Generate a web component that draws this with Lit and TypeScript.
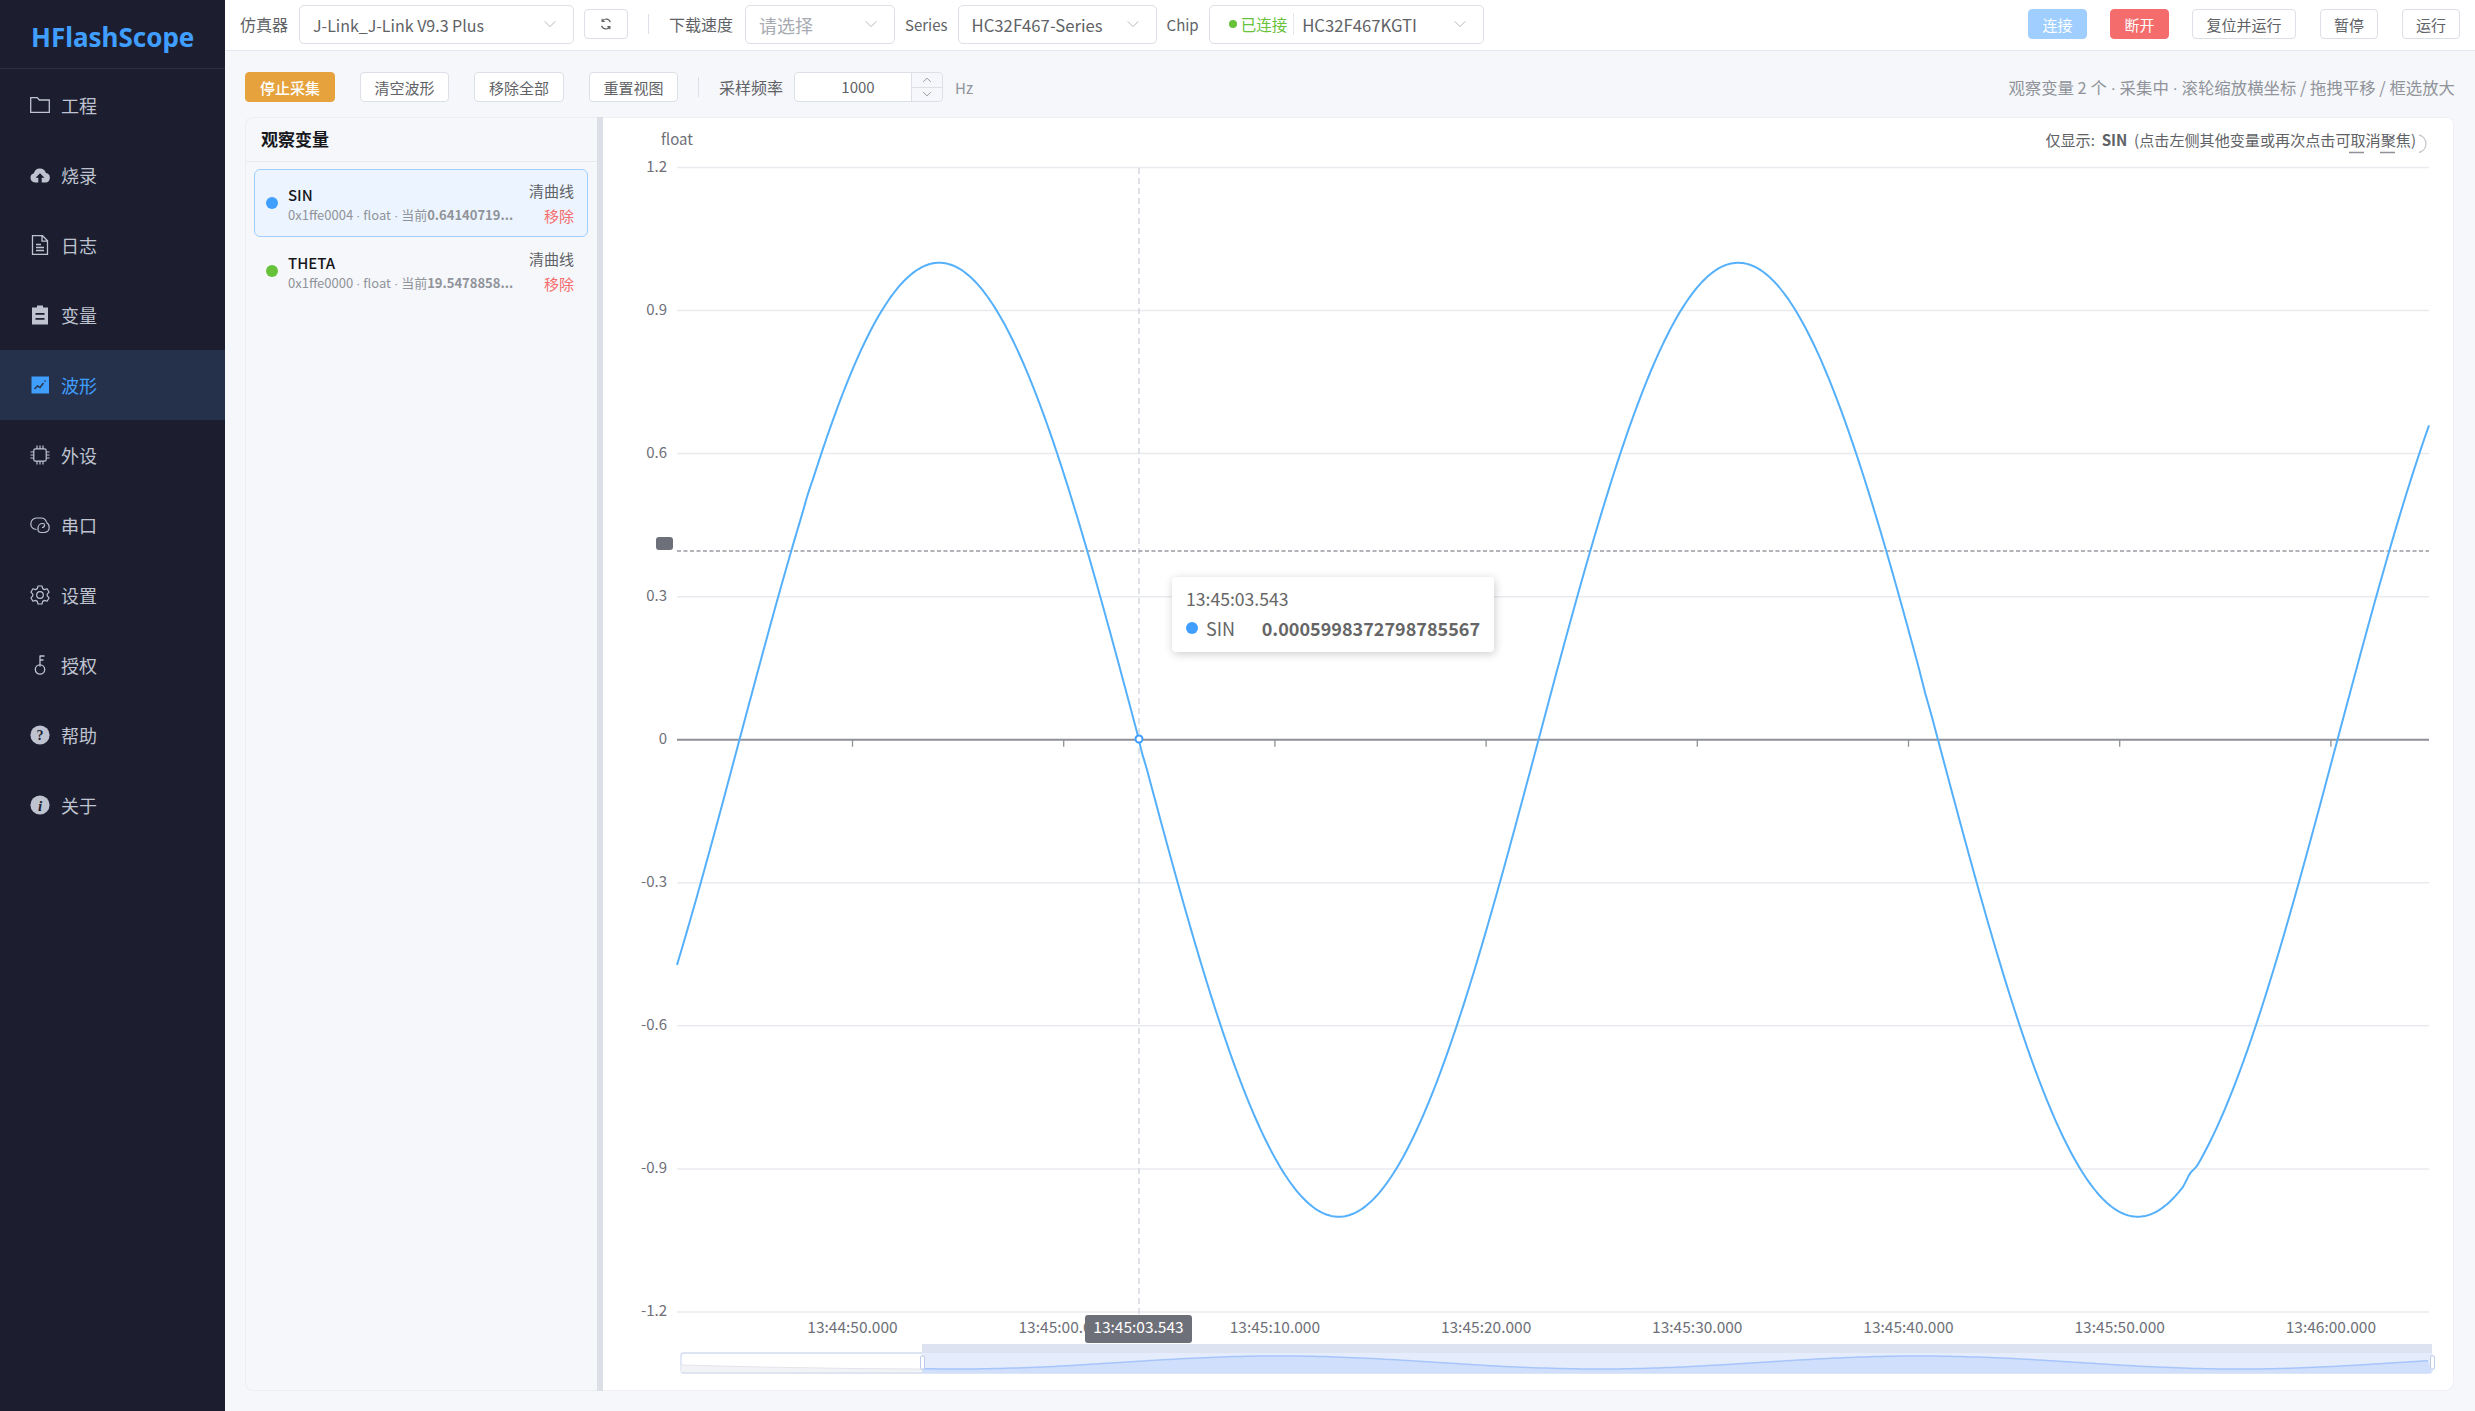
import { LitElement, html, css, svg } from "lit";
import { customElement } from "lit/decorators.js";

const icons: Record<string, unknown> = {
  folder: svg`<path d="M.7 2.600h6.600l2 2.400h10v12.400H.7z" fill="none" stroke="currentColor" stroke-width="1.300"/>`,
  cloud: svg`<path d="M5 17.500A4.700 4.700 0 0 1 3.900 8.300 6.200 6.200 0 0 1 15.900 8 4.800 4.800 0 0 1 15.500 17.500H11.700V12.800H14.500L10 8.200 5.500 12.800H8.300V17.500Z" fill="currentColor"/>`,
  doc: svg`<path d="M2.500.7h10l5 5v13.600h-15zM12 .7v5.500h5.500M6 9.500h5M6 12.500h8M6 15.500h8" fill="none" stroke="currentColor" stroke-width="1.300"/>`,
  clip: svg`<path fill-rule="evenodd" d="M7 .5h6v2h5v17H2v-17h5zM5.500 8v1.800h9V8zM5.500 13v1.800h9V13z" fill="currentColor"/>`,
  chart: svg`<rect x="1.500" y="1.500" width="17.500" height="17" fill="currentColor"/><path d="M4.500 14l3-3 2.500 1.500 3.500-4.500M14.500 6.500l1-1" fill="none" stroke="#25314a" stroke-width="1.400"/>`,
  cpu: svg`<path d="M5.500 3.800h9a1.700 1.700 0 0 1 1.700 1.700v9a1.700 1.700 0 0 1-1.700 1.700h-9a1.700 1.700 0 0 1-1.700-1.700v-9a1.700 1.700 0 0 1 1.700-1.700zM7 .5v3.300M10 .5v3.300M13 .5v3.300M7 16.200v3.300M10 16.200v3.300M13 16.200v3.300M.5 7h3.300M.5 10h3.300M.5 13h3.300M16.200 7h3.300M16.200 10h3.300M16.200 13h3.300" fill="none" stroke="currentColor" stroke-width="1.200"/>`,
  link: svg`<path d="M6.500 14.500C3 14.500.8 12 .8 9 .8 5.500 3.500 3 6.500 3H11c3 0 5 2 5.500 4.500M8 15.500V13c0-2.500 2-4.500 4.500-4.500H13c.8 0 1.500.8 1.500 1.800 0 1.500-1 2.200-2.500 2.200M16.500 7.500c1.700 1 2.700 2.700 2.700 5 0 3-2.200 5-5.200 5h-3c-1.500 0-2.500-.7-3-2" fill="none" stroke="currentColor" stroke-width="1.200"/>`,
  gear: svg`<path d="M8 1h4l.7 2.600 1.900 1 2.500-.8 2 3.400-1.900 1.900v1.800l1.900 1.900-2 3.400-2.500-.8-1.900 1L12 19H8l-.7-2.600-1.900-1-2.500.8-2-3.400 1.900-1.900V9.100L.900 7.200l2-3.400 2.500.8 1.900-1z" fill="none" stroke="currentColor" stroke-width="1.200" stroke-linejoin="round"/><circle cx="10" cy="10" r="3.300" fill="none" stroke="currentColor" stroke-width="1.200"/>`,
  key: svg`<path d="M10 .5v11M10 1h4.500M10 5h3.500" fill="none" stroke="currentColor" stroke-width="1.300"/><circle cx="10" cy="14.500" r="4.700" fill="none" stroke="currentColor" stroke-width="1.300"/>`,
  help: svg`<circle cx="10" cy="10" r="9.600" fill="currentColor"/><text x="10" y="15" text-anchor="middle" font-size="14" font-weight="700" font-family="Liberation Serif, serif" fill="#1c1e2f">?</text>`,
  info: svg`<circle cx="10" cy="10" r="9.600" fill="currentColor"/><text x="10" y="15.500" text-anchor="middle" font-size="15" font-weight="700" font-style="italic" font-family="Liberation Serif, serif" fill="#1c1e2f">i</text>`,
};

const NAV = [
  { label: "工程", icon: "folder" },
  { label: "烧录", icon: "cloud" },
  { label: "日志", icon: "doc" },
  { label: "变量", icon: "clip" },
  { label: "波形", icon: "chart", active: true },
  { label: "外设", icon: "cpu" },
  { label: "串口", icon: "link" },
  { label: "设置", icon: "gear" },
  { label: "授权", icon: "key" },
  { label: "帮助", icon: "help" },
  { label: "关于", icon: "info" },
];

const VARS = [
  { name: "SIN", addr: "0x1ffe0004", value: "0.64140719...", color: "#409eff", active: true },
  { name: "THETA", addr: "0x1ffe0000", value: "19.5478858...", color: "#67c23a", active: false },
];

const chevron = html`<svg class="chev" viewBox="0 0 16 16"><path d="M2 5l6 6 6-6" fill="none" stroke="currentColor" stroke-width="1"/></svg>`;
const dot = html`<span class="mid">·</span>`;

// chart geometry, in page pixels (the svg viewBox starts at the card's corner)
const Y0 = 739.75;
const YSTEP = 143.06;
const LEFT = 677;
const RIGHT = 2429;
const yTicks = ["1.2", "0.9", "0.6", "0.3", "0", "-0.3", "-0.6", "-0.9", "-1.2"];
const xTicks = [
  "13:44:50.000", "13:45:00.000", "13:45:10.000", "13:45:20.000",
  "13:45:30.000", "13:45:40.000", "13:45:50.000", "13:46:00.000",
];
const xOf = (i: number) => 852.5 + i * 211.2;

// small jumps in the sampled curve: [x, half width, dy]
const KINKS = [
  [2190, 7, -4],
  [808, 6, -1.5],
  [1925, 6, 1.5],
  [1142, 5, 2],
];

function sinePath() {
  const pts: string[] = [];
  for (let x = LEFT; x <= RIGHT; x += 2) {
    let y = Y0 + 477 * Math.sin((2 * Math.PI * (x - 1139)) / 799);
    for (const [c, w, dy] of KINKS) y += dy * Math.max(0, 1 - Math.abs(x - c) / w);
    pts.push(`${x},${y.toFixed(1)}`);
  }
  return "M" + pts.join("L");
}

function miniLine() {
  const pts: string[] = [];
  for (let x = 922; x <= 2432; x += 6) {
    const y = 1362.5 + 6.5 * Math.cos((2 * Math.PI * (x - 2239)) / 640);
    pts.push(`${x},${y.toFixed(1)}`);
  }
  return "M" + pts.join("L");
}

@customElement("wave-chart")
class WaveChart extends LitElement {
  static styles = css`
    :host { display: block; width: 100%; height: 100%; }
    svg { display: block; width: 100%; height: 100%; font-family: "Noto Sans CJK SC", "Noto Sans", sans-serif; }
    .lbl { font-size: 15px; fill: #6e7079; }
    .xl { font-size: 15.5px; fill: #6e7079; }
  `;

  render() {
    const mini = miniLine();
    return html`<svg viewBox="603 117 1851 1274">
      <text class="lbl" x="661" y="144.500">float</text>
      ${yTicks.map((t, i) => {
        const y = 167.5 + i * YSTEP;
        return svg`
          ${t !== "0" ? svg`<line x1=${LEFT} x2=${RIGHT} y1=${y} y2=${y} stroke="#e9ebf0" stroke-width="1.500"/>` : null}
          <text class="lbl" x="667" y=${y + 4} text-anchor="end">${t}</text>`;
      })}
      <line x1=${LEFT} x2=${RIGHT} y1=${Y0} y2=${Y0} stroke="#8f9198" stroke-width="2"/>
      ${xTicks.map((_, i) => svg`<line x1=${xOf(i)} x2=${xOf(i)} y1=${Y0} y2=${Y0 + 7} stroke="#8f9198" stroke-width="1.300"/>`)}
      ${xTicks.map((t, i) => svg`<text class="xl" x=${xOf(i)} y="1333" text-anchor="middle">${t}</text>`)}

      <line x1="1139" x2="1139" y1="168" y2="1315" stroke="#d5d8e2" stroke-width="1.500" stroke-dasharray="6 4"/>
      <line x1=${LEFT} x2=${RIGHT} y1="551" y2="551" stroke="#9a9ca3" stroke-width="1.300" stroke-dasharray="4 2.500"/>
      <rect x="656" y="537" width="17" height="13" rx="3" fill="#6e7079"/>

      <path d=${sinePath()} fill="none" stroke="#55b0fb" stroke-width="2" stroke-linejoin="round"/>
      <circle cx="1139" cy="739" r="3.500" fill="#fff" stroke="#409eff" stroke-width="2"/>

      <rect x="1085" y="1315" width="107" height="28" rx="3" fill="#6e7079"/>
      <text x="1138.500" y="1333" text-anchor="middle" font-size="15.500" fill="#fff">13:45:03.543</text>

      <rect x="681" y="1353" width="1751" height="20" rx="3" fill="#fff" stroke="#d2dbee" stroke-width="1.300"/>
      <path d="M681 1365L760 1367L850 1368.500L922 1369V1372H681Z" fill="#f2f3f6"/>
      <path d="M681 1365L760 1367L850 1368.500L922 1369" fill="none" stroke="#e3e5ea" stroke-width="1"/>
      <rect x="922" y="1344" width="1510" height="9" fill="#dde3f1"/>
      <rect x="922" y="1353" width="1510" height="20" fill="#e5edfd"/>
      <path d="${mini}L2432,1373L922,1373Z" fill="#d0dffb"/>
      <path d=${mini} fill="none" stroke="#a8c5fb" stroke-width="1.500"/>
      <rect x="920.500" y="1356" width="4" height="13" rx="1" fill="#fff" stroke="#bccbe8"/>
      <rect x="2430.500" y="1356" width="4" height="13" rx="1" fill="#fff" stroke="#bccbe8"/>

      <path d="M2349 152.500h15M2380 152.500h15" stroke="#8f9198" stroke-width="1.300"/>
      <path d="M2419 135a9 9 0 0 1 0 17.500" fill="none" stroke="#c4c6cc" stroke-width="1.300"/>
    </svg>`;
  }
}

@customElement("app-root")
export class AppRoot extends LitElement {
  static styles = css`
    :host {
      display: flex;
      width: 2475px;
      height: 1411px;
      overflow: hidden;
      background: #f5f7fb;
      font-family: "Noto Sans CJK SC", "Noto Sans", sans-serif;
      color: #606266;
    }

    .side { width: 225px; flex: none; background: #1c1e2f; }
    .logo {
      height: 69px;
      box-sizing: border-box;
      border-bottom: 1px solid #2d2f40;
      padding-left: 31px;
      font: 700 26px/74px "Noto Sans", sans-serif;
      color: #409eff;
    }
    .nav { padding-top: 1px; }
    .nav-item {
      height: 70px;
      display: flex;
      align-items: center;
      gap: 11px;
      padding-left: 30px;
      font-size: 18px;
      color: #bfc3cf;
    }
    .nav-item.active { background: #25314a; color: #409eff; }
    .nav-item svg { width: 20px; height: 20px; flex: none; }

    .main { flex: 1; min-width: 0; display: flex; flex-direction: column; }

    .head {
      height: 51px;
      box-sizing: border-box;
      flex: none;
      background: #fff;
      border-bottom: 1px solid #e4e7f0;
      display: flex;
      align-items: center;
      padding: 0 15px 2px 15px;
      font-size: 16px;
    }
    .head label { white-space: nowrap; }
    .head label.en { font-size: 15px; margin-left: 10px; }
    .sel {
      height: 39px;
      box-sizing: border-box;
      border: 1px solid #dcdfe6;
      border-radius: 5px;
      background: #fff;
      display: flex;
      align-items: center;
      padding: 0 16px 0 13px;
      margin-left: 10px;
      font-size: 16.7px;
      color: #606266;
    }
    .sel .val { flex: 1; white-space: nowrap; padding-top: 1px; }
    .sel .narrow { font-size: 16px; }
    .sel .ph { color: #a8abb2; font-size: 18px; }
    .sel-probe { width: 275px; margin-left: 11px; }
    .sel-speed { width: 150px; margin-left: 12px; }
    .sel-series { width: 199px; }
    .sel-chip { width: 275px; }
    .chev { width: 14px; height: 14px; color: #a8abb2; flex: none; }
    .state {
      color: #67c23a;
      font-size: 15.5px;
      display: flex;
      align-items: center;
      gap: 4px;
      margin-left: 6px;
      padding-right: 6px;
      margin-right: 8px;
      border-right: 1px solid #e4e7ed;
      white-space: nowrap;
      height: 22px;
    }
    .state i { width: 8px; height: 8px; border-radius: 50%; background: #67c23a; }
    .vline { width: 1px; height: 20px; margin: 0 20px; background: #dcdfe6; }
    .spacer { flex: 1; }

    .btn {
      height: 30px;
      box-sizing: border-box;
      border: 1px solid #dcdfe6;
      border-radius: 4px;
      background: #fff;
      display: flex;
      align-items: center;
      justify-content: center;
      font-size: 15px;
      color: #606266;
      white-space: nowrap;
    }
    .btn.orange { background: #e6a23c; border-color: #e6a23c; color: #fff; font-weight: 500; }
    .btn.blue { background: #a0cfff; border-color: #a0cfff; color: #fff; }
    .btn.red { background: #f56c6c; border-color: #f56c6c; color: #fff; }
    .btn svg { width: 14px; height: 14px; }
    .refresh { width: 44px; margin-left: 10px; }
    .w59 { width: 59px; }
    .w104 { width: 104px; margin-left: 23px; }
    .w58 { width: 58px; margin-left: 24px; }
    .ml23 { margin-left: 23px; }
    .tool { width: 90px; }
    .tool + .tool { margin-left: 25px; }
    .tool.slim { width: 89px; }

    .tools {
      flex: none;
      height: 66px;
      box-sizing: border-box;
      display: flex;
      align-items: center;
      padding: 6px 20px 0 20px;
      font-size: 16px;
    }
    .num {
      width: 149px;
      height: 30px;
      margin-left: 11px;
      box-sizing: border-box;
      border: 1px solid #dcdfe6;
      border-radius: 4px;
      background: #fff;
      display: flex;
      font-size: 15px;
    }
    .num .v { flex: 1; text-align: center; line-height: 28px; padding-left: 10px; }
    .num .arrows { width: 30px; border-left: 1px solid #dcdfe6; display: flex; flex-direction: column; background: #f5f7fa; border-radius: 0 4px 4px 0; }
    .num .arrows span { flex: 1; display: flex; align-items: center; justify-content: center; color: #606266; }
    .num .arrows span + span { border-top: 1px solid #dcdfe6; }
    .num .arrows svg { width: 10px; height: 10px; }
    .hz { margin-left: 12px; color: #909399; font-size: 15px; }
    .hint { margin-left: auto; color: #909399; white-space: nowrap; font-size: 16.4px; }
    .mid { font-family: "Liberation Sans", sans-serif; }

    .body {
      flex: 1;
      min-height: 0;
      display: flex;
      padding: 0 21px 20px 20px;
    }
    .list {
      width: 352px;
      box-sizing: border-box;
      flex: none;
      background: #f5f7fb;
      border: 1px solid #eceef4;
      border-right: 0;
      border-radius: 8px 0 0 8px;
    }
    .list h3 {
      margin: 0;
      height: 44px;
      box-sizing: border-box;
      border-bottom: 1px solid #e8eaf0;
      padding-left: 15px;
      font-size: 17px;
      line-height: 42px;
      font-weight: 700;
      color: #17181c;
    }
    .cards { padding: 7px 9px 0 8px; display: flex; flex-direction: column; }
    .card {
      height: 68px;
      box-sizing: border-box;
      border: 1px solid transparent;
      border-radius: 6px;
      display: flex;
      align-items: center;
      padding: 0 13px 0 11px;
    }
    .card.active { background: #ecf5ff; border-color: #a0cfff; }
    .dot { width: 12px; height: 12px; border-radius: 50%; flex: none; margin-right: 10px; }
    .info { flex: 1; min-width: 0; padding-top: 3px; }
    .name { font-size: 15px; line-height: 19px; font-weight: 500; color: #17181c; }
    .addr { font-size: 13px; line-height: 19px; margin-top: 1px; color: #909399; white-space: nowrap; }
    .addr b { font-weight: 700; }
    .acts { display: flex; flex-direction: column; align-items: flex-end; gap: 5px; font-size: 15px; line-height: 20px; }
    .acts .rm { color: #f56c6c; }

    .split { width: 6px; flex: none; background: #dcdfe6; }

    .plot {
      flex: 1;
      min-width: 0;
      position: relative;
      background: #fff;
      box-shadow: inset 0 1px 0 #eef0f5, inset -1px -1px 0 #eef0f5;
      border-radius: 0 8px 8px 0;
    }
    .focus {
      position: absolute;
      top: 11px;
      right: 38px;
      font-size: 15.1px;
      line-height: 22px;
      color: #606266;
      white-space: pre;
    }
    .focus b { font-weight: 700; }
    .tip {
      position: absolute;
      left: 569px;
      top: 460px;
      width: 322px;
      height: 75px;
      box-sizing: border-box;
      padding: 10px 14px;
      background: #fff;
      border-radius: 4px;
      box-shadow: 1px 2px 10px rgba(0, 0, 0, 0.2);
      font-size: 18px;
      line-height: 24px;
      color: #666;
    }
    .tip .time { font-size: 17.6px; }
    .tip .row { display: flex; align-items: center; margin-top: 5px; }
    .tip i { width: 12px; height: 12px; border-radius: 50%; background: #409eff; margin-right: 8px; }
    .tip b { margin-left: auto; font-weight: 700; }
  `;

  render() {
    return html`
      <aside class="side">
        <div class="logo">HFlashScope</div>
        <nav class="nav">
          ${NAV.map(
            (n) => html`<div class="nav-item ${n.active ? "active" : ""}">
              <svg viewBox="0 0 20 20">${icons[n.icon]}</svg>
              <span>${n.label}</span>
            </div>`
          )}
        </nav>
      </aside>
      <div class="main">
        <header class="head">
          <label>仿真器</label>
          <div class="sel sel-probe">
            <span class="val narrow">J-Link_J-Link V9.3 Plus</span>${chevron}
          </div>
          <div class="btn refresh">
            <svg viewBox="0 0 16 16"><path d="M13 6a5.200 5.200 0 0 0-9.500-1M3 10a5.200 5.200 0 0 0 9.500 1M3.500 2v3h3M12.500 14v-3h-3" fill="none" stroke="currentColor" stroke-width="1.300"/></svg>
          </div>
          <div class="vline"></div>
          <label>下载速度</label>
          <div class="sel sel-speed">
            <span class="val ph">请选择</span>${chevron}
          </div>
          <label class="en">Series</label>
          <div class="sel sel-series">
            <span class="val">HC32F467-Series</span>${chevron}
          </div>
          <label class="en">Chip</label>
          <div class="sel sel-chip">
            <span class="state"><i></i>已连接</span>
            <span class="val">HC32F467KGTI</span>${chevron}
          </div>
          <div class="spacer"></div>
          <div class="btn blue w59">连接</div>
          <div class="btn red w59 ml23">断开</div>
          <div class="btn w104">复位并运行</div>
          <div class="btn w58">暂停</div>
          <div class="btn w58">运行</div>
        </header>
        <div class="tools">
          <div class="btn orange tool">停止采集</div>
          <div class="btn tool slim">清空波形</div>
          <div class="btn tool">移除全部</div>
          <div class="btn tool slim">重置视图</div>
          <div class="vline"></div>
          <span>采样频率</span>
          <div class="num">
            <span class="v">1000</span>
            <div class="arrows">
              <span><svg viewBox="0 0 16 16"><path d="M2 11l6-6 6 6" fill="none" stroke="currentColor"/></svg></span>
              <span><svg viewBox="0 0 16 16"><path d="M2 5l6 6 6-6" fill="none" stroke="currentColor"/></svg></span>
            </div>
          </div>
          <span class="hz">Hz</span>
          <span class="hint">观察变量 2 个 ${dot} 采集中 ${dot} 滚轮缩放横坐标 / 拖拽平移 / 框选放大</span>
        </div>
        <div class="body">
          <section class="list">
            <h3>观察变量</h3>
            <div class="cards">
              ${VARS.map(
                (v) => html`<div class="card ${v.active ? "active" : ""}">
                  <span class="dot" style="background:${v.color}"></span>
                  <div class="info">
                    <div class="name">${v.name}</div>
                    <div class="addr">${v.addr} ${dot} float ${dot} 当前<b>${v.value}</b></div>
                  </div>
                  <div class="acts"><span>清曲线</span><span class="rm">移除</span></div>
                </div>`
              )}
            </div>
          </section>
          <div class="split"></div>
          <section class="plot">
            <wave-chart></wave-chart>
            <div class="focus">仅显示:  <b>SIN</b>  (点击左侧其他变量或再次点击可取消聚焦)</div>
            <div class="tip">
              <div class="time">13:45:03.543</div>
              <div class="row"><i></i><span>SIN</span><b>0.0005998372798785567</b></div>
            </div>
          </section>
        </div>
      </div>
    `;
  }
}
